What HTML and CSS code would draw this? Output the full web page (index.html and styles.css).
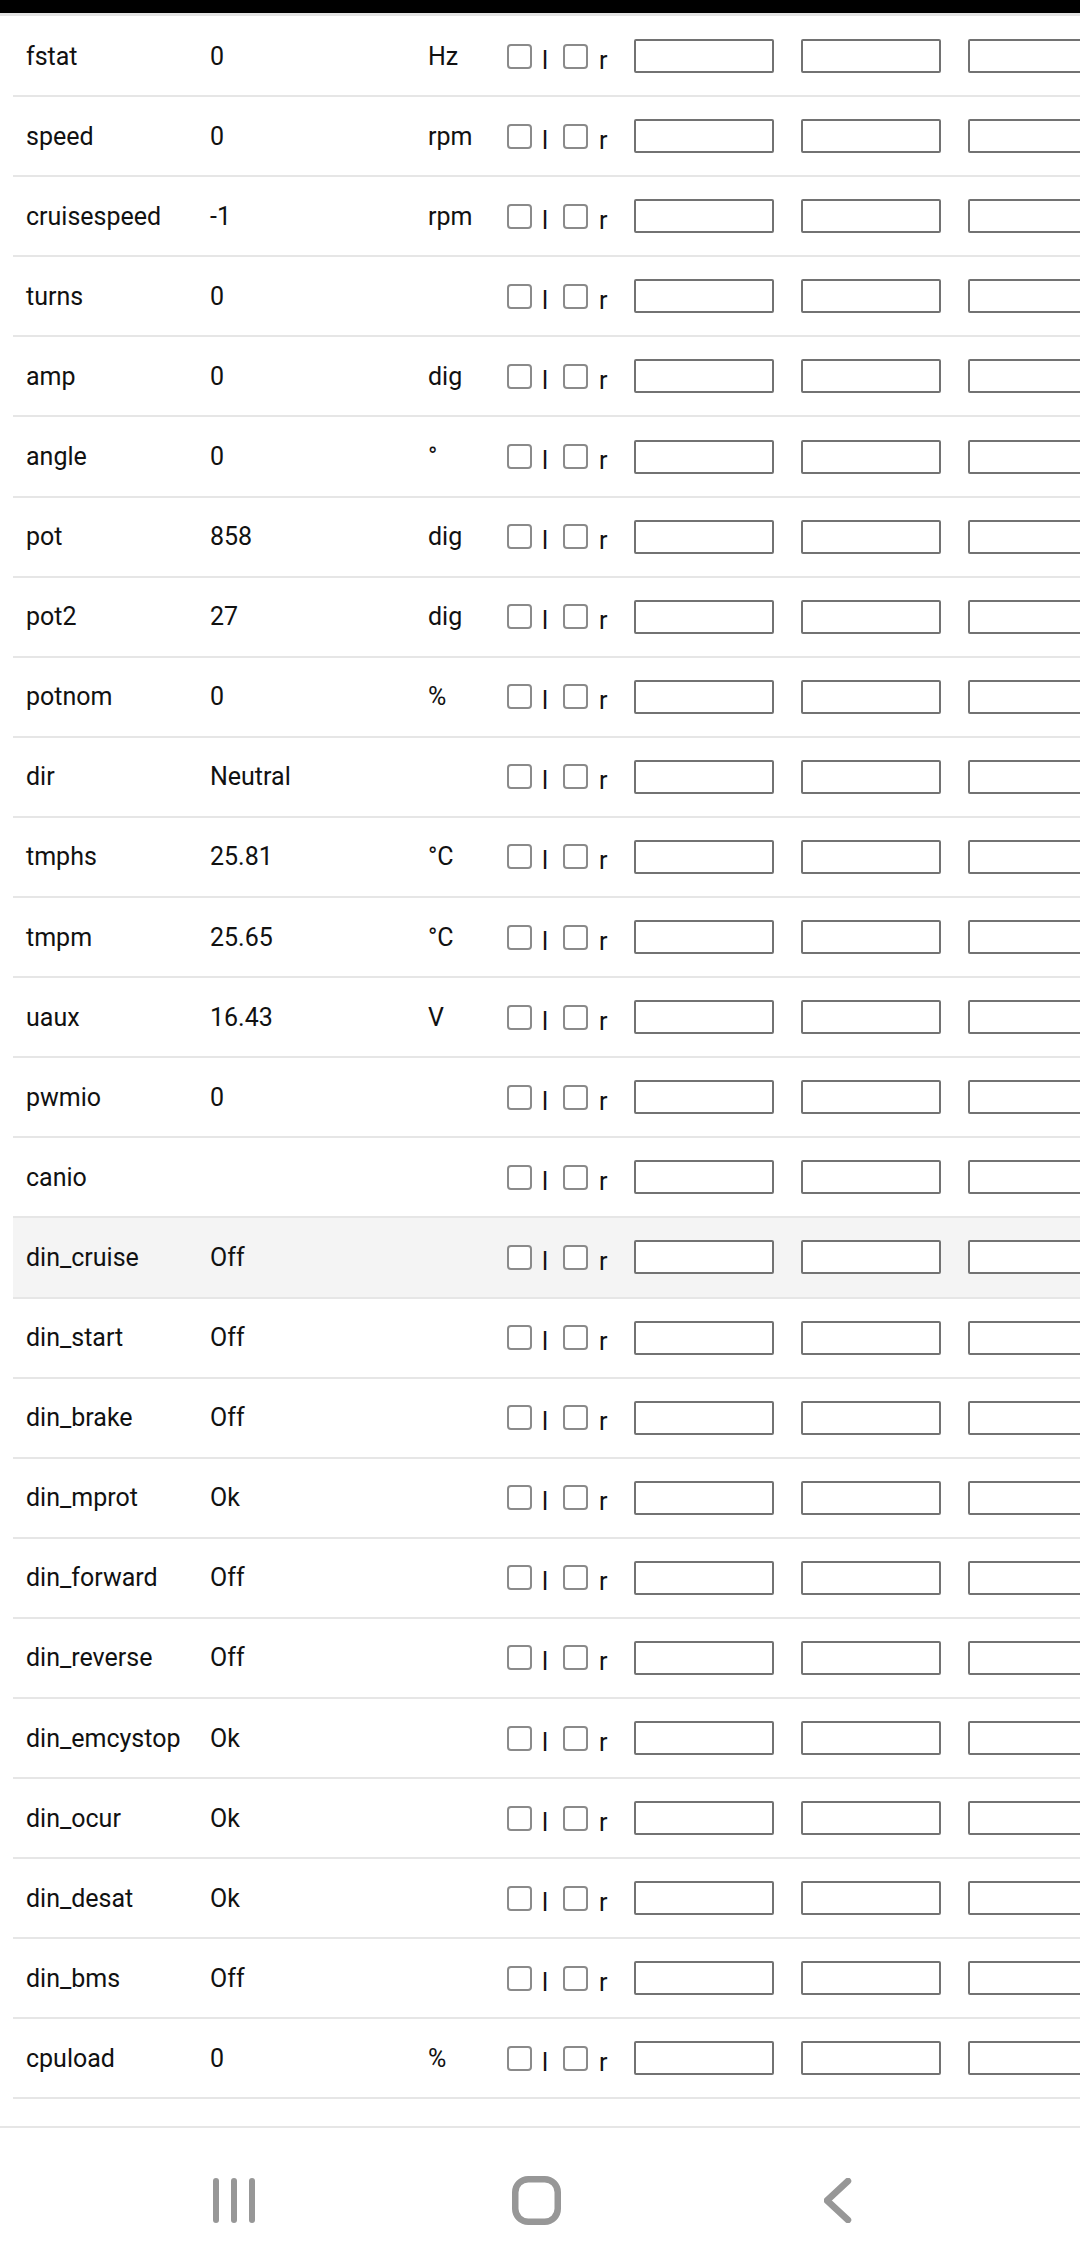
FILE: index.html
```html
<!DOCTYPE html>
<html>
<head>
  <title>Spot values</title>
  <link rel="stylesheet" href="styles.css">
</head>
<body>
  <div id="status-bar"></div>

  <div id="content">
    <table id="spot-values">
      <colgroup>
        <col class="col-name">
        <col class="col-value">
        <col class="col-unit">
        <col class="col-plot">
        <col class="col-can">
        <col class="col-can">
        <col class="col-can">
      </colgroup>
      <tbody id="values"></tbody>
    </table>
  </div>

  <div id="nav-bar">
    <div class="nav-btn">
      <svg width="42" height="45" viewBox="0 0 42 45">
        <rect x="0" y="0" width="6" height="45" rx="3"/>
        <rect x="18" y="0" width="6" height="45" rx="3"/>
        <rect x="36" y="0" width="6" height="45" rx="3"/>
      </svg>
    </div>
    <div class="nav-btn">
      <svg width="49" height="49" viewBox="0 0 49 49">
        <rect x="3.25" y="3.25" width="42.5" height="42.5" rx="13" class="stroke"/>
      </svg>
    </div>
    <div class="nav-btn">
      <svg width="28" height="45" viewBox="0 0 28 45">
        <polyline points="24,3 3,22.5 24,42" class="stroke"/>
      </svg>
    </div>
  </div>

  <script>
    const spots = [
      ['fstat', '0', 'Hz'],
      ['speed', '0', 'rpm'],
      ['cruisespeed', '-1', 'rpm'],
      ['turns', '0', ''],
      ['amp', '0', 'dig'],
      ['angle', '0', '°'],
      ['pot', '858', 'dig'],
      ['pot2', '27', 'dig'],
      ['potnom', '0', '%'],
      ['dir', 'Neutral', ''],
      ['tmphs', '25.81', '°C'],
      ['tmpm', '25.65', '°C'],
      ['uaux', '16.43', 'V'],
      ['pwmio', '0', ''],
      ['canio', '', ''],
      ['din_cruise', 'Off', ''],
      ['din_start', 'Off', ''],
      ['din_brake', 'Off', ''],
      ['din_mprot', 'Ok', ''],
      ['din_forward', 'Off', ''],
      ['din_reverse', 'Off', ''],
      ['din_emcystop', 'Ok', ''],
      ['din_ocur', 'Ok', ''],
      ['din_desat', 'Ok', ''],
      ['din_bms', 'Off', ''],
      ['cpuload', '0', '%']
    ];

    // row under the finger
    const HOVERED = 'din_cruise';

    const tbody = document.getElementById('values');

    spots.forEach(function(spot) {
      const row = document.createElement('tr');
      if (spot[0] === HOVERED) row.className = 'hover';

      let html = '<td>' + spot[0] + '</td>' +
                 '<td>' + spot[1] + '</td>' +
                 '<td>' + spot[2] + '</td>' +
                 '<td class="plot"><div class="plot-box">' +
                 '<input type="checkbox" class="axis"><span class="axis-label">l</span>' +
                 '<input type="checkbox" class="axis"><span class="axis-label">r</span>' +
                 '</div></td>';

      for (let i = 0; i < 3; i++) {
        html += '<td><input type="text" class="can-input"></td>';
      }

      row.innerHTML = html;
      tbody.appendChild(row);
    });
  </script>
</body>
</html>
```

FILE: styles.css
```css
html, body {
  margin: 0;
  padding: 0;
  overflow: hidden;
}

body {
  width: 1080px;
  height: 2263px;
  display: flex;
  flex-direction: column;
  background: white;
  font-family: Roboto, 'Noto Sans', sans-serif;
  font-size: 25px;
  color: #111;
}

#status-bar {
  height: 13px;
  flex-shrink: 0;
  background: #000;
}

#content {
  flex: 1;
  overflow: hidden;
  border-top: 3px solid #e3e3e3;
  padding: 1px 0 0 13px;
}

#spot-values {
  border-collapse: separate;
  border-spacing: 0;
  table-layout: fixed;
  width: 1109px;
}

.col-name { width: 184px; }
.col-value { width: 218px; }
.col-unit { width: 74px; }
.col-plot { width: 132px; }
.col-can { width: 167px; }

#spot-values td {
  height: 78.1px;
  padding: 0 13px;
  border-bottom: 2px solid #e6e6e6;
  vertical-align: middle;
  white-space: nowrap;
}

#spot-values tr.hover td {
  background: #f4f4f4;
}

.plot-box {
  display: flex;
  align-items: center;
}

.axis {
  -webkit-appearance: none;
  appearance: none;
  box-sizing: border-box;
  width: 25px;
  height: 25px;
  margin: 0 0 0 5px;
  border: 2px solid #8a8a8a;
  border-radius: 4px;
  background: white;
}

.axis-label {
  margin-left: 10px;
  padding-top: 8px;
}

.axis-label + .axis {
  margin-left: 15px;
}

.axis-label:last-child {
  margin-left: 11px;
}

.can-input {
  display: block;
  box-sizing: border-box;
  width: 140px;
  height: 34px;
  margin: 0;
  padding: 0 4px;
  border: 2px solid #727272;
  border-radius: 2px;
  background: white;
  font: inherit;
}

#nav-bar {
  box-sizing: border-box;
  height: 137px;
  flex-shrink: 0;
  border-top: 2px solid #e6e6e6;
  padding: 9px 8px 0 0;
  display: flex;
  justify-content: center;
  align-items: center;
  background: white;
}

.nav-btn {
  width: 302px;
  display: flex;
  justify-content: center;
}

.nav-btn svg {
  display: block;
  fill: #979797;
}

.nav-btn .stroke {
  fill: none;
  stroke: #979797;
  stroke-width: 6.5;
  stroke-linecap: round;
  stroke-linejoin: round;
}
```
